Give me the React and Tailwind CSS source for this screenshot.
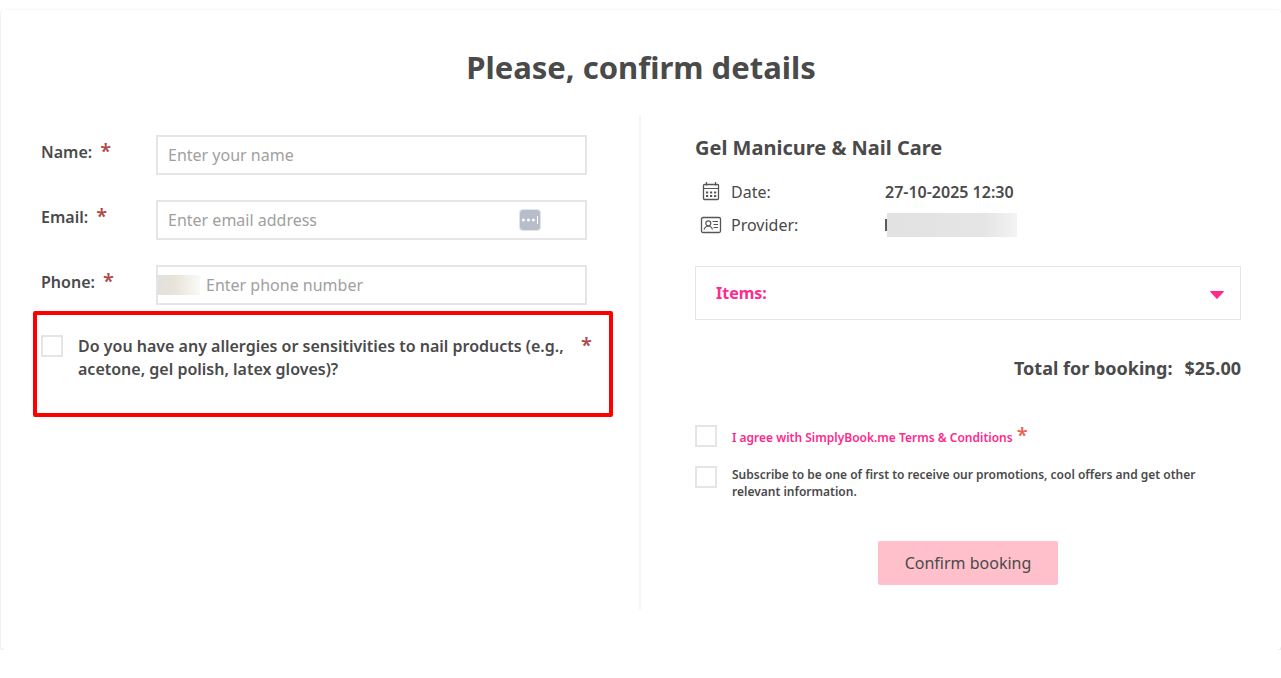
import React from "react";

function Star({ className = "text-[#b04a4a]" }) {
  return (
    <span aria-hidden="true" className={`text-xl leading-5 font-semibold ${className}`}>
      *
    </span>
  );
}

function Field({ id, label, children }) {
  return (
    <div className="flex items-start">
      <label htmlFor={id} className="flex w-[115px] shrink-0 gap-2 pt-1.5 leading-[22px] font-semibold">
        {label}
        <Star />
      </label>
      <div className="relative flex h-10 min-w-0 flex-1 items-center border-2 border-[#e5e5e5]">{children}</div>
    </div>
  );
}

const inputClass =
  "h-full w-full min-w-0 bg-transparent px-2.5 text-base placeholder:text-[#a0a0a0] outline-none";

const checkClass =
  "size-[22px] shrink-0 appearance-none border-2 border-[#e5e5e5] bg-white checked:bg-[#ff2a8c]";

function PasswordBadge() {
  return (
    <svg viewBox="0 0 22 22" className="absolute right-11 size-[22px]" aria-hidden="true">
      <rect x="0.5" y="0.5" width="21" height="21" rx="3.5" fill="#b7bdc9" stroke="#e1e4ea" />
      <g fill="#fff">
        <circle cx="4.4" cy="11" r="1.5" />
        <circle cx="9.4" cy="11" r="1.5" />
        <circle cx="14.4" cy="11" r="1.5" />
        <rect x="18" y="7" width="1" height="8" />
      </g>
    </svg>
  );
}

function CalendarIcon() {
  return (
    <svg viewBox="0 0 20 20" className="size-5" fill="none" stroke="#555" aria-hidden="true">
      <rect x="2.5" y="2.5" width="15" height="15" rx="1" strokeWidth="1.3" />
      <path d="M2.5 6.5h15M5.5 0v3.500M14.500 0v3.500" strokeWidth="1.2" />
      <path d="M5 10.500h2.200M9 10.500h2.200M13 10.500h2.200M5 14h2.200M9 14h2.200M13 14h2.200" strokeWidth="2.200" />
    </svg>
  );
}

function ProviderIcon() {
  return (
    <svg viewBox="0 0 22 18" className="h-[18px] w-[22px]" fill="none" stroke="#555" aria-hidden="true">
      <rect x="1.5" y="1.5" width="19" height="15" rx="1.5" strokeWidth="1.3" />
      <circle cx="8.3" cy="7.3" r="2.5" strokeWidth="1.200" />
      <path d="M4 13.500c.8-2.200 2-3.500 4.300-3.500s3.400 1.300 4.200 3.500" strokeWidth="1.200" />
      <path d="M12.500 5.500h5.500M13.500 8.500h4.500M13.500 11.500h4.500" strokeWidth="1" />
    </svg>
  );
}

export default function App() {
  return (
    <main className="bg-white pt-2.5 pl-px font-['Noto_Sans',sans-serif] text-base text-[#4a4a4a]">
      <form
        onSubmit={(e) => e.preventDefault()}
        className="rounded bg-white px-10 pt-9 pb-10 shadow-[0_0_2px_rgba(0,0,0,0.08),0_1px_2px_rgba(0,0,0,0.14)]"
      >
        <h1 className="text-center text-[31px] leading-[42px] font-bold">Please, confirm details</h1>

        <div className="mt-[27px] grid grid-cols-2">
          <section className="border-r-2 border-[#f5f5f5] pt-5 pr-[52px]">
            <div className="flex flex-col gap-[25px]">
              <Field id="name" label="Name:">
                <input id="name" type="text" placeholder="Enter your name" className={inputClass} />
              </Field>
              <Field id="email" label="Email:">
                <input id="email" type="email" placeholder="Enter email address" className={inputClass} />
                <PasswordBadge />
              </Field>
              <Field id="phone" label="Phone:">
                <span className="h-5 w-[42px] shrink-0 bg-linear-to-r from-[#e2e1dc] via-[#e9e3da] via-40% to-[#fafaf8]" />
                <input
                  id="phone"
                  type="tel"
                  placeholder="Enter phone number"
                  className="h-full min-w-0 flex-1 bg-transparent px-1.5 placeholder:text-[#a0a0a0] outline-none"
                />
              </Field>
            </div>

            <div className="-mr-[26px] -ml-2 mt-1.5 flex h-[106px] items-start rounded-xs border-4 border-[#ff0000] px-1 pt-5">
              <input id="allergies" type="checkbox" className={checkClass} />
              <label htmlFor="allergies" className="ml-[15px] flex flex-1 justify-between pr-[13px] leading-[23px] font-semibold">
                <span className="max-w-[495px]">
                  Do you have any allergies or sensitivities to nail products (e.g., acetone, gel polish, latex
                  gloves)?
                </span>
                <Star />
              </label>
            </div>
          </section>

          <section className="pt-5 pl-[54px]">
            <h2 className="text-xl leading-[26px] font-bold">Gel Manicure &amp; Nail Care</h2>
            <dl className="mt-[19px] grid grid-cols-[190px_1fr] gap-y-[9px] leading-6">
              <dt className="flex items-center">
                <span className="mr-1 flex w-8 justify-center">
                  <CalendarIcon />
                </span>
                Date:
              </dt>
              <dd className="font-semibold">27-10-2025 12:30</dd>
              <dt className="flex items-center">
                <span className="mr-1 flex w-8 justify-center">
                  <ProviderIcon />
                </span>
                Provider:
              </dt>
              <dd className="flex items-center">
                <span className="h-3 w-[2px] bg-[#5a5a5a]" />
                <span className="h-6 w-[130px] bg-linear-to-r from-[#e2e2e2] via-[#e5e5e5] via-75% to-[#f3f3f3]" />
              </dd>
            </dl>

            <button
              type="button"
              className="mt-[29px] flex h-[54px] w-full items-center justify-between border border-[#e5e5e5] pr-4 pl-5 font-bold text-[#ff2a8c]"
            >
              Items:
              <svg viewBox="0 0 14 8" className="mt-1 h-2 w-[14px]" fill="#ff2a8c" aria-hidden="true">
                <path d="M.8 0h12.400q1.200 0 .4.900L7.600 7.600q-.6.600-1.200 0L.4.900Q-.4 0 .8 0z" />
              </svg>
            </button>

            <p className="mt-[35px] flex justify-end gap-3 text-lg leading-[26px] font-bold">
              <span>Total for booking:</span>
              <span>$25.00</span>
            </p>

            <div className="mt-11 flex flex-col gap-[19px] text-xs leading-[17px] font-semibold">
              <div className="flex items-start">
                <input id="terms" type="checkbox" aria-label="I agree with SimplyBook.me Terms & Conditions" className={checkClass} />
                <span className="ml-[15px] flex gap-1">
                  <a href="#terms" className="pt-1 text-[#ff2a8c]">
                    I agree with SimplyBook.me Terms &amp; Conditions
                  </a>
                  <Star className="text-[#ee6055]" />
                </span>
              </div>
              <div className="flex items-start">
                <input id="subscribe" type="checkbox" className={checkClass} />
                <label htmlFor="subscribe" className="ml-[15px] max-w-[490px]">
                  Subscribe to be one of first to receive our promotions, cool offers and get other relevant
                  information.
                </label>
              </div>
            </div>

            <div className="mt-[41px] mb-[25px] flex justify-center">
              <button type="submit" className="h-11 w-[180px] rounded-xs bg-[#ffc0cb]">
                Confirm booking
              </button>
            </div>
          </section>
        </div>
      </form>
    </main>
  );
}
